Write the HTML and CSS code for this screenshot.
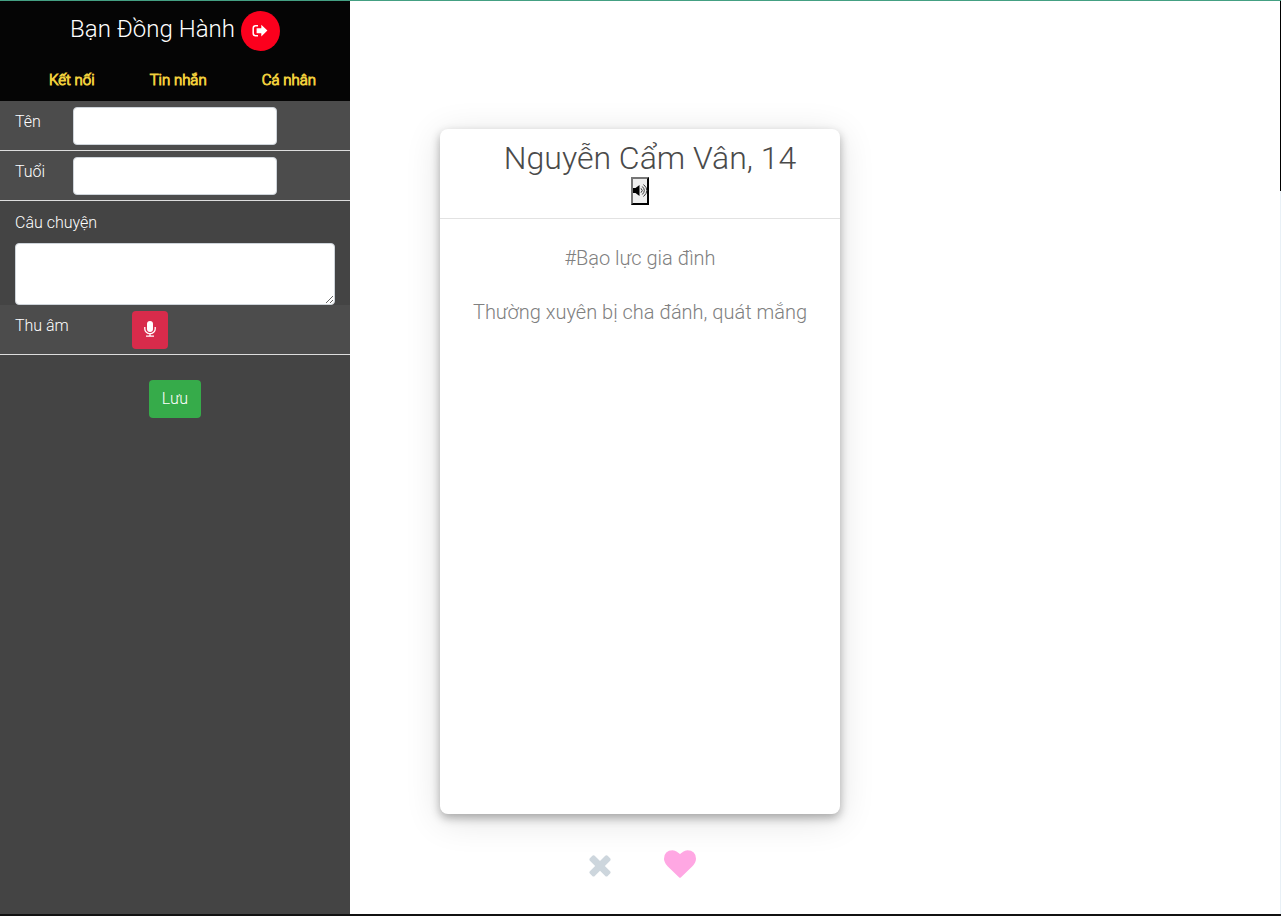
FILE: index.html
```html
<!DOCTYPE html>
<html lang="vi">
<head>
<meta charset="utf-8">
<meta name="viewport" content="width=device-width, initial-scale=1">
<title>Bạn Đồng Hành</title>
<link rel="stylesheet" href="styles.css">
</head>
<body>
<div class="app">
  <aside class="sidebar">
    <header class="sidebar-header">
      <div class="brand">
        <h1 class="brand-name">Bạn Đồng Hành</h1>
        <button class="logout" type="button" aria-label="Đăng xuất">
          <svg width="16" height="16" viewBox="0 0 16 16" aria-hidden="true">
            <path d="M6 2.700H3.700Q1.200 2.700 1.200 5.200V10.200Q1.200 12.700 3.700 12.700H6" fill="none" stroke="#fff" stroke-width="1.500"/>
            <path d="M4.600 5.200H9.300V1.800L15.400 7.600L9.300 13.400V10.200H4.600Z" fill="#fff"/>
          </svg>
        </button>
      </div>
      <nav class="tabs">
        <a href="#connect">Kết nối</a>
        <a href="#messages">Tin nhắn</a>
        <a href="#profile">Cá nhân</a>
      </nav>
    </header>
    <form class="profile-form">
      <div class="row">
        <label class="row-label" for="name">Tên</label>
        <input class="control" id="name" type="text">
      </div>
      <div class="row">
        <label class="row-label" for="age">Tuổi</label>
        <input class="control" id="age" type="text">
      </div>
      <div class="story">
        <label for="story">Câu chuyện</label>
        <textarea class="control story-text" id="story" rows="2"></textarea>
      </div>
      <div class="row">
        <span class="row-label row-label-wide" id="record-label">Thu âm</span>
        <button class="record" type="button" aria-labelledby="record-label">
          <svg width="12" height="18" viewBox="0 0 12 18" aria-hidden="true">
            <rect x="3" y="0" width="6" height="11" rx="3" fill="#fff"/>
            <path d="M.8 6V8A5.200 4.700 0 0 0 11.200 8V6M6 12.700V15M2 15.200H10" fill="none" stroke="#fff" stroke-width="1.300"/>
          </svg>
        </button>
      </div>
      <button class="save" type="submit">Lưu</button>
    </form>
  </aside>
  <main class="stage">
    <article class="card">
      <header class="card-header">
        <h2 class="card-title">Nguyễn Cẩm Vân, 14</h2>
        <button class="speak" type="button" aria-label="Nghe">
          <svg width="16" height="16" viewBox="0 0 16 16" aria-hidden="true">
            <path d="M0 5H2.500L6.500 2V13L2.500 10H0Z" fill="#000"/>
            <path d="M8 5.300Q10.500 7.500 8 9.700M9.300 3.500Q13.300 7.500 9.300 11.500M10.500 1.500Q17.300 7.500 10.500 13.500" fill="none" stroke="#333" stroke-width="1"/>
          </svg>
        </button>
      </header>
      <div class="card-body">
        <p>#Bạo lực gia đình</p>
        <p>Thường xuyên bị cha đánh, quát mắng</p>
      </div>
    </article>
    <div class="actions">
      <button class="action" type="button" aria-label="Bỏ qua">
        <svg width="32" height="32" viewBox="0 0 1792 1792" aria-hidden="true">
          <path d="M1490 1364q0 40-28 68l-136 136q-28 28-68 28t-68-28l-294-294-294 294q-28 28-68 28t-68-28l-136-136q-28-28-28-68t28-68l294-294-294-294q-28-28-28-68t28-68l136-136q28-28 68-28t68 28l294 294 294-294q28-28 68-28t68 28l136 136q28 28 28 68t-28 68l-294 294 294 294q28 28 28 68z" fill="#cdd6dd"/>
        </svg>
      </button>
      <button class="action" type="button" aria-label="Yêu thích">
        <svg width="32" height="32" viewBox="0 0 1792 1792" aria-hidden="true">
          <path d="M896 1664q-26 0-44-18l-624-602q-10-8-27.500-26T145 952.500 77 855 23.500 734 0 596q0-220 127-344t351-124q62 0 126.500 21.500t120 58T820 276t76 68q36-36 76-68t95.500-68.500 120-58T1314 128q224 0 351 124t127 344q0 221-229 450l-623 600q-18 18-44 18z" fill="#ffa7e3"/>
        </svg>
      </button>
    </div>
  </main>
  <div class="scroll-track"><div class="scroll-thumb"></div></div>
</div>
</body>
</html>
```
FILE: styles.css
```css
* {
  box-sizing: border-box;
}

body {
  margin: 0;
  font-family: Roboto, "Noto Sans", sans-serif;
  font-size: 16px;
  font-weight: 300;
  line-height: 24px;
  color: #fff;
  background: #fff;
}

button,
input,
textarea {
  font: inherit;
}

svg {
  display: block;
}

.app {
  display: grid;
  grid-template-columns: 350px 1fr 1px;
  min-height: 100vh;
  border-top: 1px solid #44a083;
  border-bottom: 2px solid #111;
}

.sidebar {
  background: #444;
}

.sidebar-header {
  height: 100px;
  padding-top: 10px;
  background: #050505;
}

.brand {
  display: flex;
  justify-content: center;
  gap: 6px;
}

.brand-name {
  margin: 0;
  font-size: 24px;
  font-weight: 300;
  line-height: 36px;
}

.logout {
  display: grid;
  place-items: center;
  width: 39px;
  height: 40px;
  padding: 0;
  border: 0;
  border-radius: 50%;
  background: #fc001d;
}

.tabs {
  display: flex;
  justify-content: space-between;
  padding: 17px 34px 0 49px;
}

.tabs a {
  color: #f0cf3c;
  font-size: 15px;
  text-decoration: none;
  -webkit-text-stroke: 1px #f0cf3c;
}

.row {
  display: flex;
  height: 50px;
  padding: 6px 15px 0;
  border-bottom: 1px solid #ddd;
  background: #4c4c4c;
}

.row-label {
  width: 58px;
  line-height: 30px;
}

.row-label-wide {
  width: 117px;
}

.control {
  width: 204px;
  height: 38px;
  padding: 6px 12px;
  border: 1px solid #ced4da;
  border-radius: 4px;
  color: #495057;
  background: #fff;
}

.story {
  padding: 10px 15px 0;
}

.story label {
  display: block;
  margin-bottom: 8px;
}

.story-text {
  display: block;
  width: 100%;
  height: 62px;
}

.record,
.save {
  height: 38px;
  padding: 0 12px;
  border: 0;
  border-radius: 4px;
  color: #fff;
}

.record {
  display: grid;
  place-items: center;
  background: #d82b4b;
}

.save {
  display: block;
  width: 52px;
  margin: 25px auto;
  background: #36ab4a;
}

.stage {
  display: flex;
  flex-direction: column;
  padding: 128px 90px 0;
}

.card {
  flex: 1;
  width: 100%;
  max-width: 400px;
  border-radius: 8px;
  text-align: center;
  background: #fff;
  box-shadow: 0 4px 10px rgba(0, 0, 0, 0.3), 0 6px 36px rgba(0, 0, 0, 0.12);
}

.card-header {
  display: flex;
  flex-direction: column;
  align-items: center;
  height: 90px;
  padding-top: 10px;
  border-bottom: 1px solid #e2e2e2;
}

.card-title {
  margin: 0;
  padding-left: 20px;
  font-size: 32px;
  font-weight: 300;
  line-height: 38px;
  color: #4a4a4a;
}

.speak {
  display: grid;
  place-items: center;
  width: 18px;
  height: 28px;
  padding: 0;
  border: 2px outset #222;
  background: #efefef;
}

.card-body {
  padding: 24px 20px;
  font-size: 20px;
  line-height: 30px;
  color: #808080;
}

.card-body p {
  margin: 0 0 24px;
}

.actions {
  display: flex;
  justify-content: center;
  gap: 48px;
  width: 100%;
  max-width: 400px;
  height: 100px;
  padding-top: 34px;
}

.action {
  width: 32px;
  height: 32px;
  padding: 0;
  border: 0;
  background: none;
}

.scroll-track {
  background: #e8f0f6;
}

.scroll-thumb {
  height: 190px;
  background: #000;
}
```
